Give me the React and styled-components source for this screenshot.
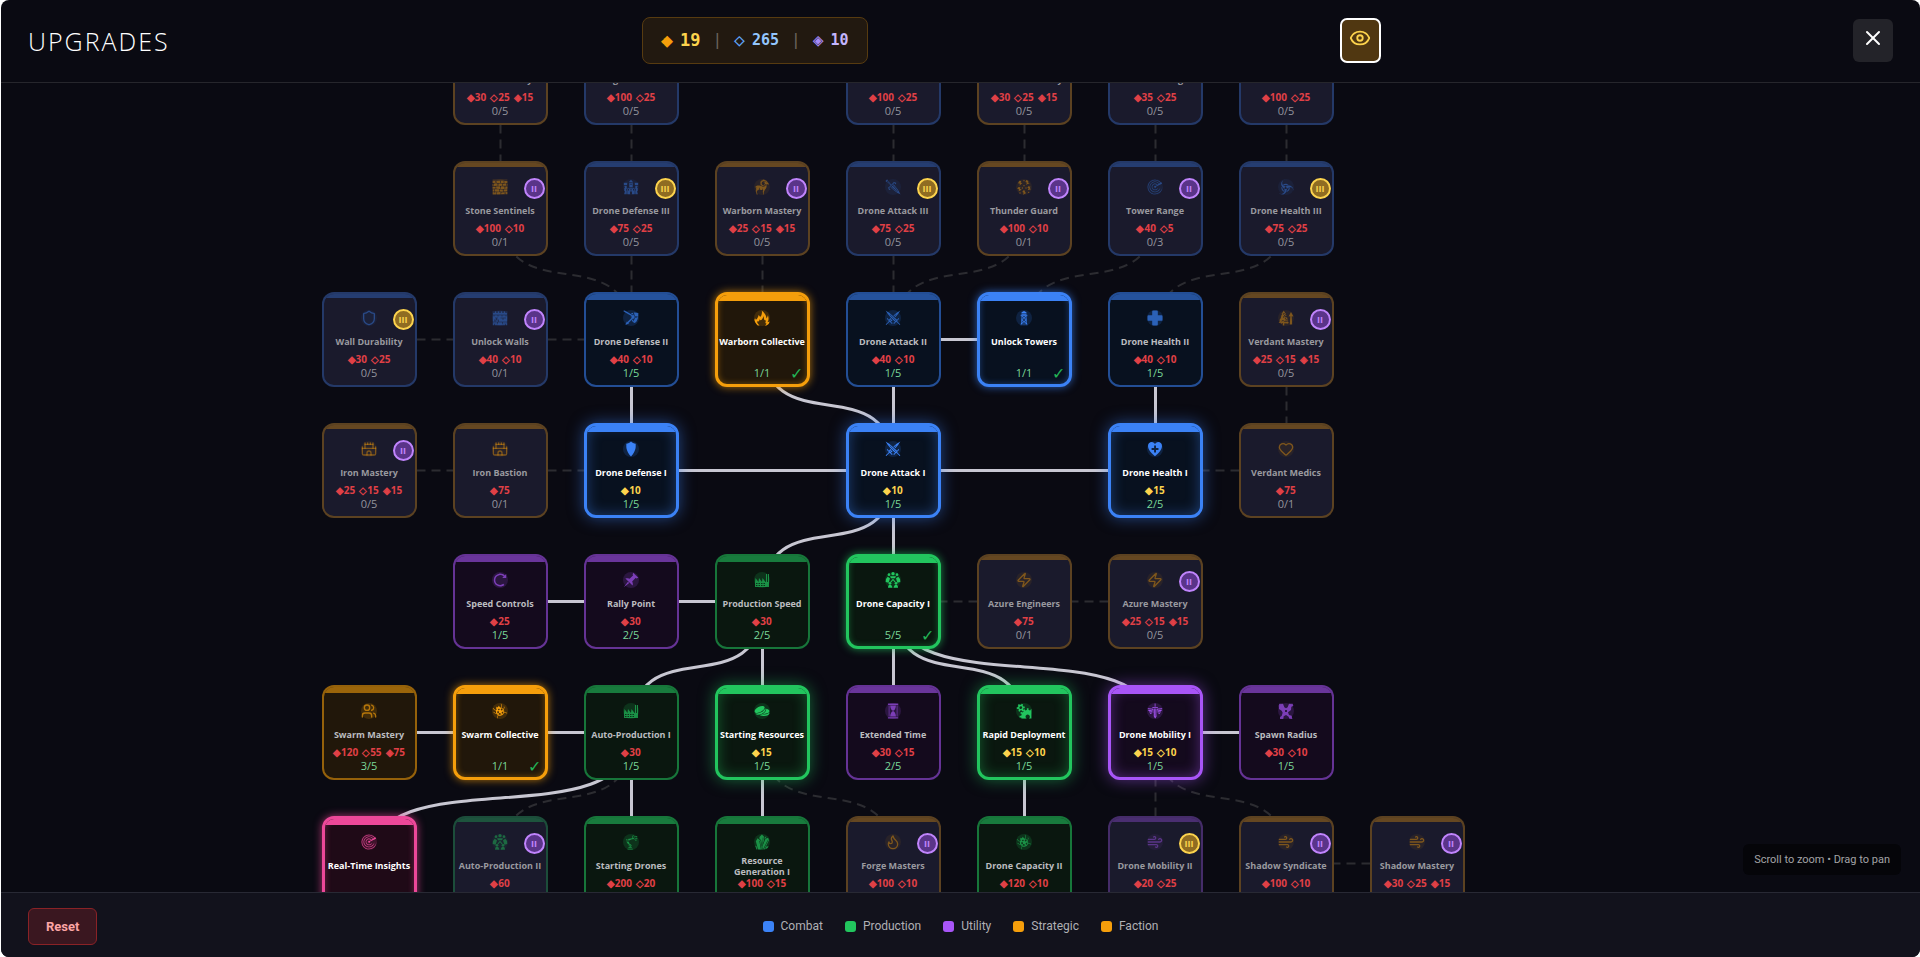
import React, { useRef, useState } from "react";
import styled, { createGlobalStyle, css } from "styled-components";
import { Castle, Eye, Flame, Heart, Shield, Users, Wind, X, Zap } from "lucide-react";
import {
  GiBroadDagger,
  GiCastle,
  GiClockwiseRotation,
  GiCrossedSwords,
  GiCrystalGrowth,
  GiDefensiveWall,
  GiFactory,
  GiFlame,
  GiGears,
  GiHealthNormal,
  GiHeartPlus,
  GiHourglass,
  GiMechanicalArm,
  GiPin,
  GiRadarSweep,
  GiRam,
  GiRegeneration,
  GiShield,
  GiShieldReflect,
  GiSpottedBug,
  GiStoneWall,
  GiTreeGrowth,
  GiTwoCoins,
  GiWatchtower,
  GiWingedSword
} from "react-icons/gi";

const NODE_SIZE = 95;
const PITCH = 131;
const CURVE = 0.85;

const HiveIcon = ({ size }) => (
  <svg width={size} height={size} viewBox="0 0 48 48" fill="currentColor">
    <circle cx="24" cy="5" r="5" />
    <circle cx="12" cy="8" r="4" />
    <circle cx="36" cy="8" r="4" />
    <path d="M15 13h18l-3 6H18z" />
    <path d="M8 14l7 5-4 13-9-2q-2-9 6-16z" />
    <path d="M40 14l-7 5 4 13 9-2q2-9-6-16z" />
    <path d="M24 20l8 9-3 2-5-6-5 6-3-2z" />
    <circle cx="15" cy="34" r="4" />
    <circle cx="33" cy="34" r="4" />
    <path d="M9 47q0-9 6-9t7 9z" />
    <path d="M26 47q1-9 7-9t6 9z" />
  </svg>
);

const SparksIcon = ({ size }) => (
  <svg width={size} height={size} viewBox="0 0 48 48" fill="currentColor">
    <path d="M10 5l6 1-2 5 5 1-9 8 2-6-6-1z" />
    <path d="M31 3l7 3-3 4 6 3-11 4 3-6-5-2z" />
    <path d="M6 25l7-1-1 5 5 3-9 5 1-6-5-1z" />
    <path d="M37 22l7 1-3 4 4 4-10 3 3-6-4-2z" />
    <path d="M22 34l6 1-2 4 5 3-10 5 2-6-4-2z" />
    <circle cx="24" cy="20" r="2" />
    <circle cx="30" cy="27" r="2" />
    <circle cx="19" cy="27" r="2" />
    <circle cx="24" cy="5" r="2" />
    <circle cx="12" cy="42" r="2" />
    <circle cx="38" cy="40" r="2" />
  </svg>
);

const SpawnIcon = ({ size }) => (
  <svg width={size} height={size} viewBox="0 0 48 48" fill="currentColor">
    <path d="M4 2h11l4 11 5 3 5-3 4-11h11l2 7-6 2-1 10-9 7 3 8 8 2 2 10-9-1-2-6-8-5-7 4-1 8-10 1v-7l5-3 3-10-3-6-8-5-1-10z" />
    <circle cx="24" cy="24" r="3" fill="#140a1d" />
  </svg>
);

const KINDS = {
  combat: { color: "#3b82f6", rgb: "59, 130, 246", background: "#08111f" },
  production: { color: "#22c55e", rgb: "34, 197, 94", background: "#0a170f" },
  utility: { color: "#a855f7", rgb: "168, 85, 247", background: "#140a1d" },
  faction: { color: "#f59e0b", rgb: "245, 158, 11", background: "#21170a" },
  insight: { color: "#ec4899", rgb: "236, 72, 153", background: "#1f0a17" }
};

const GEMS = ["◆", "◇", "◈"];

// [column, row, name, kind, state, icon, costs, rank, tier]
const UPGRADES = [
  [1, 0, "Stone Mastery", "faction", "locked", Shield, [30, 25, 15], "0/5"],
  [2, 0, "Siege Defense", "combat", "locked", GiCastle, [100, 25], "0/5"],
  [4, 0, "Drone Attack IV", "combat", "locked", GiBroadDagger, [100, 25], "0/5"],
  [5, 0, "Thunder Mastery", "faction", "locked", Zap, [30, 25, 15], "0/5"],
  [6, 0, "Tower Damage", "combat", "locked", GiWatchtower, [35, 25], "0/5"],
  [7, 0, "Drone Health IV", "combat", "locked", Heart, [100, 25], "0/5"],

  [1, 1, "Stone Sentinels", "faction", "locked", GiStoneWall, [100, 10], "0/1", 2],
  [2, 1, "Drone Defense III", "combat", "locked", GiCastle, [75, 25], "0/5", 3],
  [3, 1, "Warborn Mastery", "faction", "locked", GiRam, [25, 15, 15], "0/5", 2],
  [4, 1, "Drone Attack III", "combat", "locked", GiBroadDagger, [75, 25], "0/5", 3],
  [5, 1, "Thunder Guard", "faction", "locked", SparksIcon, [100, 10], "0/1", 2],
  [6, 1, "Tower Range", "combat", "locked", GiRadarSweep, [40, 5], "0/3", 2],
  [7, 1, "Drone Health III", "combat", "locked", GiRegeneration, [75, 25], "0/5", 3],

  [0, 2, "Wall Durability", "combat", "locked", Shield, [30, 25], "0/5", 3],
  [1, 2, "Unlock Walls", "combat", "locked", GiDefensiveWall, [40, 10], "0/1", 2],
  [2, 2, "Drone Defense II", "combat", "open", GiShieldReflect, [40, 10], "1/5"],
  [3, 2, "Warborn Collective", "faction", "maxed", GiFlame, [], "1/1"],
  [4, 2, "Drone Attack II", "combat", "open", GiCrossedSwords, [40, 10], "1/5"],
  [5, 2, "Unlock Towers", "combat", "maxed", GiWatchtower, [], "1/1"],
  [6, 2, "Drone Health II", "combat", "open", GiHealthNormal, [40, 10], "1/5"],
  [7, 2, "Verdant Mastery", "faction", "locked", GiTreeGrowth, [25, 15, 15], "0/5", 2],

  [0, 3, "Iron Mastery", "faction", "locked", Castle, [25, 15, 15], "0/5", 2],
  [1, 3, "Iron Bastion", "faction", "locked", Castle, [75], "0/1"],
  [2, 3, "Drone Defense I", "combat", "ready", GiShield, [10], "1/5"],
  [4, 3, "Drone Attack I", "combat", "ready", GiCrossedSwords, [10], "1/5"],
  [6, 3, "Drone Health I", "combat", "ready", GiHeartPlus, [15], "2/5"],
  [7, 3, "Verdant Medics", "faction", "locked", Heart, [75], "0/1"],

  [1, 4, "Speed Controls", "utility", "open", GiClockwiseRotation, [25], "1/5"],
  [2, 4, "Rally Point", "utility", "open", GiPin, [30], "2/5"],
  [3, 4, "Production Speed", "production", "open", GiFactory, [30], "2/5"],
  [4, 4, "Drone Capacity I", "production", "maxed", HiveIcon, [], "5/5"],
  [5, 4, "Azure Engineers", "faction", "locked", Zap, [75], "0/1"],
  [6, 4, "Azure Mastery", "faction", "locked", Zap, [25, 15, 15], "0/5", 2],

  [0, 5, "Swarm Mastery", "faction", "open", Users, [120, 55, 75], "3/5"],
  [1, 5, "Swarm Collective", "faction", "maxed", GiSpottedBug, [], "1/1"],
  [2, 5, "Auto-Production I", "production", "open", GiFactory, [30], "1/5"],
  [3, 5, "Starting Resources", "production", "ready", GiTwoCoins, [15], "1/5"],
  [4, 5, "Extended Time", "utility", "open", GiHourglass, [30, 15], "2/5"],
  [5, 5, "Rapid Deployment", "production", "ready", GiGears, [15, 10], "1/5"],
  [6, 5, "Drone Mobility I", "utility", "ready", GiWingedSword, [15, 10], "1/5"],
  [7, 5, "Spawn Radius", "utility", "open", SpawnIcon, [30, 10], "1/5"],

  [0, 6, "Real-Time Insights", "insight", "maxed", GiRadarSweep, [], "1/1"],
  [1, 6, "Auto-Production II", "production", "locked", HiveIcon, [60], "0/5", 2],
  [2, 6, "Starting Drones", "production", "open", GiMechanicalArm, [200, 20], "1/5"],
  [3, 6, "Resource Generation I", "production", "open", GiCrystalGrowth, [100, 15], "1/5"],
  [4, 6, "Forge Masters", "faction", "locked", Flame, [100, 10], "0/1", 2],
  [5, 6, "Drone Capacity II", "production", "open", GiSpottedBug, [120, 10], "1/5"],
  [6, 6, "Drone Mobility II", "utility", "locked", Wind, [20, 25], "0/5", 3],
  [7, 6, "Shadow Syndicate", "faction", "locked", Wind, [100, 10], "0/1", 2],
  [8, 6, "Shadow Mastery", "faction", "locked", Wind, [30, 25, 15], "0/5", 2]
];

// [from column, from row, to column, to row, unlocked]
const LINKS = [
  [1, 1, 1, 0], [2, 1, 2, 0], [4, 1, 4, 0], [5, 1, 5, 0], [6, 1, 6, 0], [7, 1, 7, 0],
  [2, 2, 1, 1], [2, 2, 2, 1], [3, 2, 3, 1], [4, 2, 4, 1], [4, 2, 5, 1], [5, 2, 6, 1], [6, 2, 7, 1],
  [1, 2, 0, 2], [2, 2, 1, 2], [4, 2, 5, 2, true],
  [2, 3, 2, 2, true], [4, 3, 3, 2, true], [4, 3, 4, 2, true], [6, 3, 6, 2, true], [7, 3, 7, 2],
  [1, 3, 0, 3], [2, 3, 1, 3], [4, 3, 2, 3, true], [4, 3, 6, 3, true], [6, 3, 7, 3],
  [4, 3, 4, 4, true], [4, 3, 3, 4, true],
  [2, 4, 1, 4, true], [3, 4, 2, 4, true], [4, 4, 5, 4], [5, 4, 6, 4],
  [3, 4, 2, 5, true], [3, 4, 3, 5, true], [4, 4, 4, 5, true], [4, 4, 5, 5, true], [4, 4, 6, 5, true],
  [1, 5, 0, 5, true], [2, 5, 1, 5, true], [6, 5, 7, 5, true],
  [2, 5, 1, 6], [2, 5, 0, 6, true], [2, 5, 2, 6, true], [3, 5, 3, 6, true], [3, 5, 4, 6],
  [5, 5, 5, 6, true], [6, 5, 6, 6], [6, 5, 7, 6], [7, 6, 8, 6]
];

const LEGEND = [
  ["Combat", "#3b82f6"],
  ["Production", "#22c55e"],
  ["Utility", "#a855f7"],
  ["Strategic", "#f59e0b"],
  ["Faction", "#f59e0b"]
];

const linkPath = ([fromCol, fromRow, toCol, toRow]) => {
  const half = NODE_SIZE / 2;
  const x1 = fromCol * PITCH + half;
  const y1 = fromRow * PITCH + half;
  const x2 = toCol * PITCH + half;
  const y2 = toRow * PITCH + half;
  if (x1 === x2 || y1 === y2) return `M${x1} ${y1}L${x2} ${y2}`;
  const bend = (y2 - y1) * CURVE;
  return `M${x1} ${y1}C${x1} ${y1 + bend} ${x2} ${y2 - bend} ${x2} ${y2}`;
};

const UpgradeNode = ({ upgrade }) => {
  const [column, row, name, kind, state, Icon, costs, rank, tier] = upgrade;
  return (
    <Node
      $kind={KINDS[kind]}
      $state={state}
      style={{ left: column * PITCH, top: row * PITCH }}
    >
      <NodeBar $kind={KINDS[kind]} $state={state} />
      <NodeIcon $kind={KINDS[kind]} $state={state}>
        <Icon size={16} />
      </NodeIcon>
      <NodeName $state={state}>{name}</NodeName>
      <NodeCosts $affordable={state === "ready"}>
        {costs.map((cost, i) => (
          <span key={i}>
            {GEMS[i]}
            {cost}
          </span>
        ))}
      </NodeCosts>
      <NodeRank $locked={state === "locked"}>{rank}</NodeRank>
      {tier && <TierBadge $tier={tier}>{"I".repeat(tier)}</TierBadge>}
      {state === "maxed" && <Check>✓</Check>}
    </Node>
  );
};

const UpgradeTree = () => {
  const [pan, setPan] = useState({ x: 0, y: 0 });
  const [scale, setScale] = useState(1);
  const drag = useRef(null);

  const onPointerDown = (e) => {
    drag.current = { x: e.clientX - pan.x, y: e.clientY - pan.y };
  };
  const onPointerMove = (e) => {
    if (!drag.current) return;
    setPan({ x: e.clientX - drag.current.x, y: e.clientY - drag.current.y });
  };
  const onPointerUp = () => {
    drag.current = null;
  };
  const onWheel = (e) => {
    setScale((s) => Math.min(2, Math.max(0.5, s - e.deltaY * 0.001)));
  };

  const moved = pan.x !== 0 || pan.y !== 0 || scale !== 1;

  return (
    <Viewport
      onPointerDown={onPointerDown}
      onPointerMove={onPointerMove}
      onPointerUp={onPointerUp}
      onPointerLeave={onPointerUp}
      onWheel={onWheel}
    >
      <World
        style={
          moved
            ? { transform: `translate(${pan.x}px, ${pan.y}px) scale(${scale})` }
            : undefined
        }
      >
        <Links>
          {LINKS.map((link, i) => (
            <Link key={i} d={linkPath(link)} $unlocked={link[4]} />
          ))}
        </Links>
        {UPGRADES.map((upgrade) => (
          <UpgradeNode key={upgrade[2]} upgrade={upgrade} />
        ))}
      </World>
      <Hint>Scroll to zoom • Drag to pan</Hint>
    </Viewport>
  );
};

export default function App() {
  return (
    <>
      <GlobalStyle />
      <Screen>
        <Header>
          <Title>UPGRADES</Title>
          <Wallet>
            <Gem $color="#f59e0b" $large>◆</Gem>
            <Amount $color="#fcd34d" $large>19</Amount>
            <Divider>|</Divider>
            <Gem $color="#60a5fa">◇</Gem>
            <Amount $color="#93c5fd">265</Amount>
            <Divider>|</Divider>
            <Gem $color="#a78bfa">◈</Gem>
            <Amount $color="#c4b5fd">10</Amount>
          </Wallet>
          <RevealButton aria-label="Show all upgrades">
            <Eye size={22} />
          </RevealButton>
          <CloseButton aria-label="Close">
            <X size={24} />
          </CloseButton>
        </Header>
        <UpgradeTree />
        <Footer>
          <ResetButton>Reset</ResetButton>
          <Legend>
            {LEGEND.map(([label, color]) => (
              <LegendItem key={label}>
                <Swatch $color={color} />
                {label}
              </LegendItem>
            ))}
          </Legend>
        </Footer>
      </Screen>
    </>
  );
}

const GlobalStyle = createGlobalStyle`
  * {
    box-sizing: border-box;
  }

  body {
    margin: 0;
    background: #ffffff;
    font-family: "Open Sans", "Noto Sans", sans-serif;
  }

  button {
    font-family: inherit;
  }
`;

const Screen = styled.div`
  display: flex;
  flex-direction: column;
  height: 100vh;
  margin-left: 1px;
  border-radius: 8px;
  overflow: hidden;
  background: #0a0a12;
`;

const Header = styled.header`
  display: flex;
  align-items: center;
  justify-content: space-between;
  flex-shrink: 0;
  height: 83px;
  padding: 0 27px 2px;
  border-bottom: 1px solid #26262c;
`;

const Title = styled.h1`
  margin: 0;
  padding-top: 2px;
  color: #ffffff;
  font-size: 25px;
  font-weight: 300;
  line-height: 34px;
  letter-spacing: 2px;
`;

const Wallet = styled.div`
  display: flex;
  align-items: center;
  gap: 8px;
  height: 47px;
  padding: 0 18px;
  border: 1px solid #573b10;
  border-radius: 8px;
  background: #221910;
  font-family: "DejaVu Sans Mono", monospace;
`;

const Gem = styled.span`
  color: ${(props) => props.$color};
  font-size: ${(props) => (props.$large ? 20 : 18)}px;
  line-height: 20px;
`;

const Amount = styled.span`
  margin-left: -1px;
  color: ${(props) => props.$color};
  font-size: ${(props) => (props.$large ? 17 : 15)}px;
  font-weight: 700;
  line-height: 20px;
`;

const Divider = styled.span`
  margin: 0 4px;
  color: #6b645c;
  font-size: 16px;
  line-height: 20px;
`;

const RevealButton = styled.button`
  display: flex;
  align-items: center;
  justify-content: center;
  width: 41px;
  height: 45px;
  padding: 0 0 4px;
  border: 2px solid #ffffff;
  border-radius: 7px;
  background: #503711;
  color: #fcd34d;
  cursor: pointer;
`;

const CloseButton = styled.button`
  display: flex;
  align-items: center;
  justify-content: center;
  width: 40px;
  height: 43px;
  padding: 0 0 4px;
  border: none;
  border-radius: 6px;
  background: #232329;
  color: #ffffff;
  cursor: pointer;
`;

const Viewport = styled.main`
  position: relative;
  flex: 1;
  min-height: 0;
  overflow: hidden;
  cursor: grab;
  user-select: none;
`;

const World = styled.div`
  position: absolute;
  left: calc(50% - 639px);
  top: calc(50% - 458px);
`;

const Links = styled.svg`
  position: absolute;
  left: 0;
  top: 0;
  width: 1px;
  height: 1px;
  overflow: visible;
`;

const Link = styled.path`
  fill: none;
  stroke: #2c2c31;
  stroke-width: 2px;
  stroke-dasharray: 9 6;

  ${(props) =>
    props.$unlocked &&
    css`
      stroke: #c8c7d2;
      stroke-width: 3px;
      stroke-dasharray: none;
    `}
`;

const isLit = (state) => state === "ready" || state === "maxed";

const Node = styled.button`
  position: absolute;
  display: flex;
  flex-direction: column;
  align-items: center;
  width: ${NODE_SIZE}px;
  height: ${NODE_SIZE}px;
  padding: 0;
  border: 2px solid;
  border-radius: 12px;
  overflow: hidden;
  cursor: pointer;

  ${({ $kind, $state }) =>
    $state === "locked" &&
    css`
      border-color: rgba(${$kind.rgb}, 0.3);
      background: #1a1a2c;
    `}

  ${({ $kind, $state }) =>
    $state === "open" &&
    css`
      border-color: rgba(${$kind.rgb}, 0.55);
      background: ${$kind.background};
    `}

  ${({ $kind, $state }) =>
    $state === "maxed" &&
    css`
      border: 3px solid ${$kind.color};
      background: ${$kind.background};
      box-shadow: 0 0 8px rgba(${$kind.rgb}, 0.7),
        inset 0 0 6px rgba(${$kind.rgb}, 0.4);
    `}

  ${({ $kind, $state }) =>
    $state === "ready" &&
    css`
      border: 3px solid ${$kind.color};
      background: ${$kind.background};
      box-shadow: 0 0 16px rgba(${$kind.rgb}, 0.5),
        inset 0 0 14px rgba(${$kind.rgb}, 0.4);
    `}
`;

const NodeBar = styled.span`
  align-self: stretch;
  flex-shrink: 0;
  height: ${({ $state }) => ($state === "locked" ? 4 : 6)}px;
  background: ${({ $kind, $state }) =>
    isLit($state)
      ? $kind.color
      : `rgba(${$kind.rgb}, ${$state === "locked" ? 0.34 : 0.58})`};
`;

const NodeIcon = styled.span`
  display: flex;
  align-items: center;
  justify-content: center;
  width: 16px;
  height: 16px;
  margin-top: ${({ $state }) => ($state === "locked" ? 12 : isLit($state) ? 9 : 10)}px;
  flex-shrink: 0;
  border-radius: 50%;
  background: rgba(
    ${({ $kind, $state }) => `${$kind.rgb}, ${$state === "locked" ? 0.07 : 0.16}`}
  );
  color: ${({ $kind, $state }) =>
    isLit($state)
      ? $kind.color
      : `rgba(${$kind.rgb}, ${$state === "locked" ? 0.42 : 0.65})`};
`;

const NodeName = styled.span`
  display: flex;
  align-items: center;
  justify-content: center;
  flex-shrink: 0;
  height: 22px;
  margin-top: 5px;
  color: ${({ $state }) =>
    isLit($state) ? "#ffffff" : $state === "open" ? "#bcbdc0" : "#99999f"};
  font-size: 9px;
  font-weight: 700;
  line-height: 11px;
  text-align: center;
`;

const NodeCosts = styled.span`
  display: flex;
  justify-content: center;
  flex-shrink: 0;
  gap: 4px;
  height: 12px;
  color: ${(props) => (props.$affordable ? "#fcd34d" : "#e04046")};
  font-size: 10px;
  font-weight: 700;
  line-height: 12px;
  white-space: nowrap;
`;

const NodeRank = styled.span`
  flex-shrink: 0;
  margin-top: 1px;
  color: ${(props) => (props.$locked ? "#94949c" : "#7ad899")};
  font-size: 11px;
  font-weight: 500;
  line-height: 14px;
`;

const TierBadge = styled.span`
  position: absolute;
  top: 15px;
  right: 1px;
  width: 21px;
  height: 21px;
  border: 2px solid ${(props) => (props.$tier === 3 ? "#fcd34d" : "#c084fc")};
  border-radius: 50%;
  background: ${(props) => (props.$tier === 3 ? "#8f6c22" : "#5a3489")};
  color: ${(props) => (props.$tier === 3 ? "#fcd34d" : "#c084fc")};
  font-size: 9px;
  font-weight: 700;
  line-height: 17px;
  text-align: center;
`;

const Check = styled.span`
  position: absolute;
  right: 4px;
  bottom: 3px;
  color: #22b455;
  font-size: 16px;
  line-height: 16px;
`;

const Hint = styled.div`
  position: absolute;
  right: 19px;
  bottom: 17px;
  padding: 8px 11px;
  border-radius: 6px;
  background: #050509;
  color: #a3a3a6;
  font-family: Roboto, "Open Sans", sans-serif;
  font-size: 11px;
  line-height: 15px;
`;

const Footer = styled.footer`
  display: grid;
  grid-template-columns: 1fr auto 1fr;
  align-items: center;
  flex-shrink: 0;
  height: 65px;
  padding: 2px 27px 0;
  border-top: 1px solid #282934;
  background: #12121c;
`;

const ResetButton = styled.button`
  justify-self: start;
  height: 37px;
  padding: 0 17px;
  border: 1px solid #8a2226;
  border-radius: 6px;
  background: #3a1720;
  color: #fca5a5;
  font-family: Roboto, "Open Sans", sans-serif;
  font-size: 13px;
  font-weight: 700;
  cursor: pointer;
`;

const Legend = styled.ul`
  display: flex;
  gap: 22px;
  margin: 0;
  padding: 0;
  list-style: none;
`;

const LegendItem = styled.li`
  display: flex;
  align-items: center;
  gap: 7px;
  color: #b0b0b4;
  font-family: Roboto, "Open Sans", sans-serif;
  font-size: 12px;
  line-height: 16px;
`;

const Swatch = styled.span`
  width: 11px;
  height: 11px;
  border-radius: 3px;
  background: ${(props) => props.$color};
`;
